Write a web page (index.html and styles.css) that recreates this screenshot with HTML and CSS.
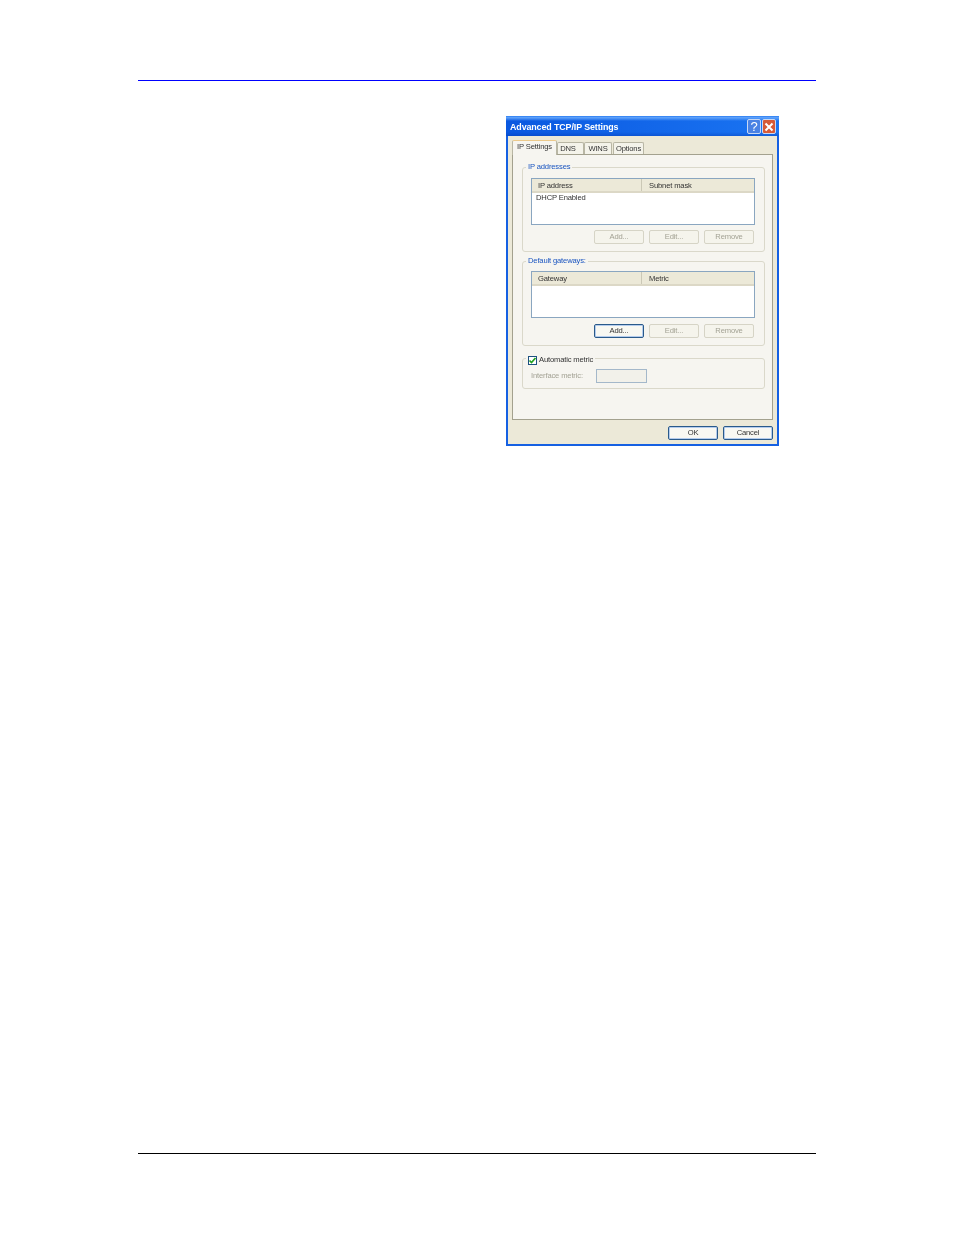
FILE: index.html
```html
<!doctype html>
<html>
<head>
	<meta charset="utf-8">
	<title>Advanced TCP/IP Settings</title>
	<link rel="stylesheet" href="styles.css">
</head>
<body>
	<div class="page">
		<div class="rule-top"></div>

		<div class="dialog">
			<div class="titlebar">
				<span class="title">Advanced TCP/IP Settings</span>
				<span class="capbtn help">?</span>
				<span class="capbtn close">
					<svg width="12" height="12" viewBox="0 0 12 12"><path d="M2.5 2.5 L9.5 9.5 M9.5 2.5 L2.5 9.5" stroke="#fff" stroke-width="2" fill="none"/></svg>
				</span>
			</div>

			<div class="tabs">
				<span class="tab active">IP Settings</span>
				<span class="tab t-dns">DNS</span>
				<span class="tab t-wins">WINS</span>
				<span class="tab t-opts">Options</span>
			</div>

			<div class="panel">
				<fieldset class="group">
					<legend>IP addresses</legend>
					<div class="list">
						<div class="listhead"><span class="col1">IP address</span><span class="col2">Subnet mask</span></div>
						<div class="listrow">DHCP Enabled</div>
					</div>
					<div class="btnrow">
						<span class="btn off">Add...</span>
						<span class="btn off">Edit...</span>
						<span class="btn off">Remove</span>
					</div>
				</fieldset>

				<fieldset class="group second">
					<legend>Default gateways:</legend>
					<div class="list">
						<div class="listhead"><span class="col1">Gateway</span><span class="col2">Metric</span></div>
					</div>
					<div class="btnrow">
						<span class="btn">Add...</span>
						<span class="btn off">Edit...</span>
						<span class="btn off">Remove</span>
					</div>
				</fieldset>

				<fieldset class="group third">
					<legend class="checklegend">
						<span class="check">
							<svg width="9" height="9" viewBox="0 0 9 9"><path d="M1.5 4.5 L3.5 6.5 L7.5 2" stroke="#21a121" stroke-width="1.7" fill="none"/></svg>
						</span>Automatic metric
					</legend>
					<div class="metric">
						<span class="metriclabel">Interface metric:</span>
						<span class="metricinput"></span>
					</div>
				</fieldset>
			</div>

			<div class="actions">
				<span class="btn">OK</span>
				<span class="btn">Cancel</span>
			</div>
		</div>

		<div class="rule-bottom"></div>
	</div>
</body>
</html>
```

FILE: styles.css
```css
* {box-sizing:border-box;}
html, body {margin:0; padding:0; background:#fff;}
.page {width:678px; height:1154px; margin-left:138px; padding-top:80px; display:flex; flex-direction:column;}
.rule-top {height:1px; background:#0000ff;}
.rule-bottom {height:1px; background:#000; margin-top:auto;}

.dialog {width:273px; height:330px; margin:35px 37px 0 0; align-self:flex-end; background:#ece9d8; border:2px solid #1560e2; border-top:0; font:7.6px/12px "Liberation Sans",Arial,sans-serif; letter-spacing:-0.15px; color:#333; filter:blur(0.4px);}

.titlebar {height:20px; margin:0 -2px; padding:1px 3px 0 4px; display:flex; align-items:center; gap:1px; background:linear-gradient(#2a7cf2 0%,#5fa2fa 8%,transparent 25%,transparent 80%,rgba(0,50,170,0.35) 100%),linear-gradient(90deg,#0a58e0,#1a74f2);}
.title {flex:1; color:#fff; font:bold 8.9px/12px "Liberation Sans",sans-serif; letter-spacing:-0.1px;}
.capbtn {width:14px; height:15px; border:1px solid #c8d8f4; border-radius:2px; display:flex; align-items:center; justify-content:center;}
.help {background:#4a82e4; color:#fff; font:normal 13px/13px "Liberation Sans",sans-serif; letter-spacing:0;}
.close {background:#d65a38;}

.tabs {height:18px; padding:4px 4px 0; display:flex; align-items:flex-end;}
.tab {height:12px; border:1px solid #b8b6a4; border-bottom:0; border-radius:2px 2px 0 0; background:#f4f3ea; text-align:center; line-height:11px;}
.tab.active {width:45px; height:15px; margin-bottom:-1px; position:relative; z-index:1; background:#f6f5f0; border-top:1px solid #ecc98a; line-height:12px;}
.t-dns {width:27px; padding-right:5px;}
.t-wins {width:28px;}
.t-opts {width:31px; margin-left:1px;}

.panel {height:266px; margin:0 4px; padding:6px 7px 0 9px; border:1px solid #a3a18e; background:#f6f5f0;}

.group {margin:0; padding:5px 9px 7px 8px; border:1px solid #dad8ca; border-radius:3px; min-width:0;}
.group legend {margin-left:-5px; padding:0 2px; color:#1a55c0; line-height:12px;}
.second {margin-top:3px; padding-top:4px;}
.second .btnrow {margin-top:6px;}
.third {margin-top:5px; padding-top:3px; padding-bottom:5px;}

.list {height:47px; border:1px solid #8aa6c0; background:#fff;}
.listhead {height:14px; display:flex; background:#ece9d8; border-bottom:2px solid #dcd8c6; line-height:13px;}
.col1 {width:110px; padding-left:6px; border-right:1px solid #cbc8b6;}
.col2 {padding-left:7px;}
.listrow {padding-left:4px; line-height:9px;}

.btnrow {margin-top:5px; display:flex; justify-content:flex-end; gap:5px; padding-right:1px;}
.btn {width:50px; height:14px; border:1px solid #2a5a8a; border-radius:2px; background:#f8f8f2; box-shadow:inset 0 0 0 1px #b4cced; text-align:center; line-height:12px;}
.btn.off {border-color:#d6d4c6; background:#f5f4ec; box-shadow:none; color:#a3a294;}

.group .checklegend {display:flex; align-items:center; padding-top:3px; color:#333;}
.check {width:9px; height:9px; margin-right:2px; border:1px solid #1c5180; background:#fff; display:flex;}
.check svg {margin:-1px;}

.metric {display:flex; align-items:center; height:14px; color:#a3a294;}
.metriclabel {width:65px;}
.metricinput {width:51px; height:14px; border:1px solid #a4b8ca; background:#f2f1ea;}

.actions {padding:6px 4px 0 0; display:flex; justify-content:flex-end; gap:5px;}
```
